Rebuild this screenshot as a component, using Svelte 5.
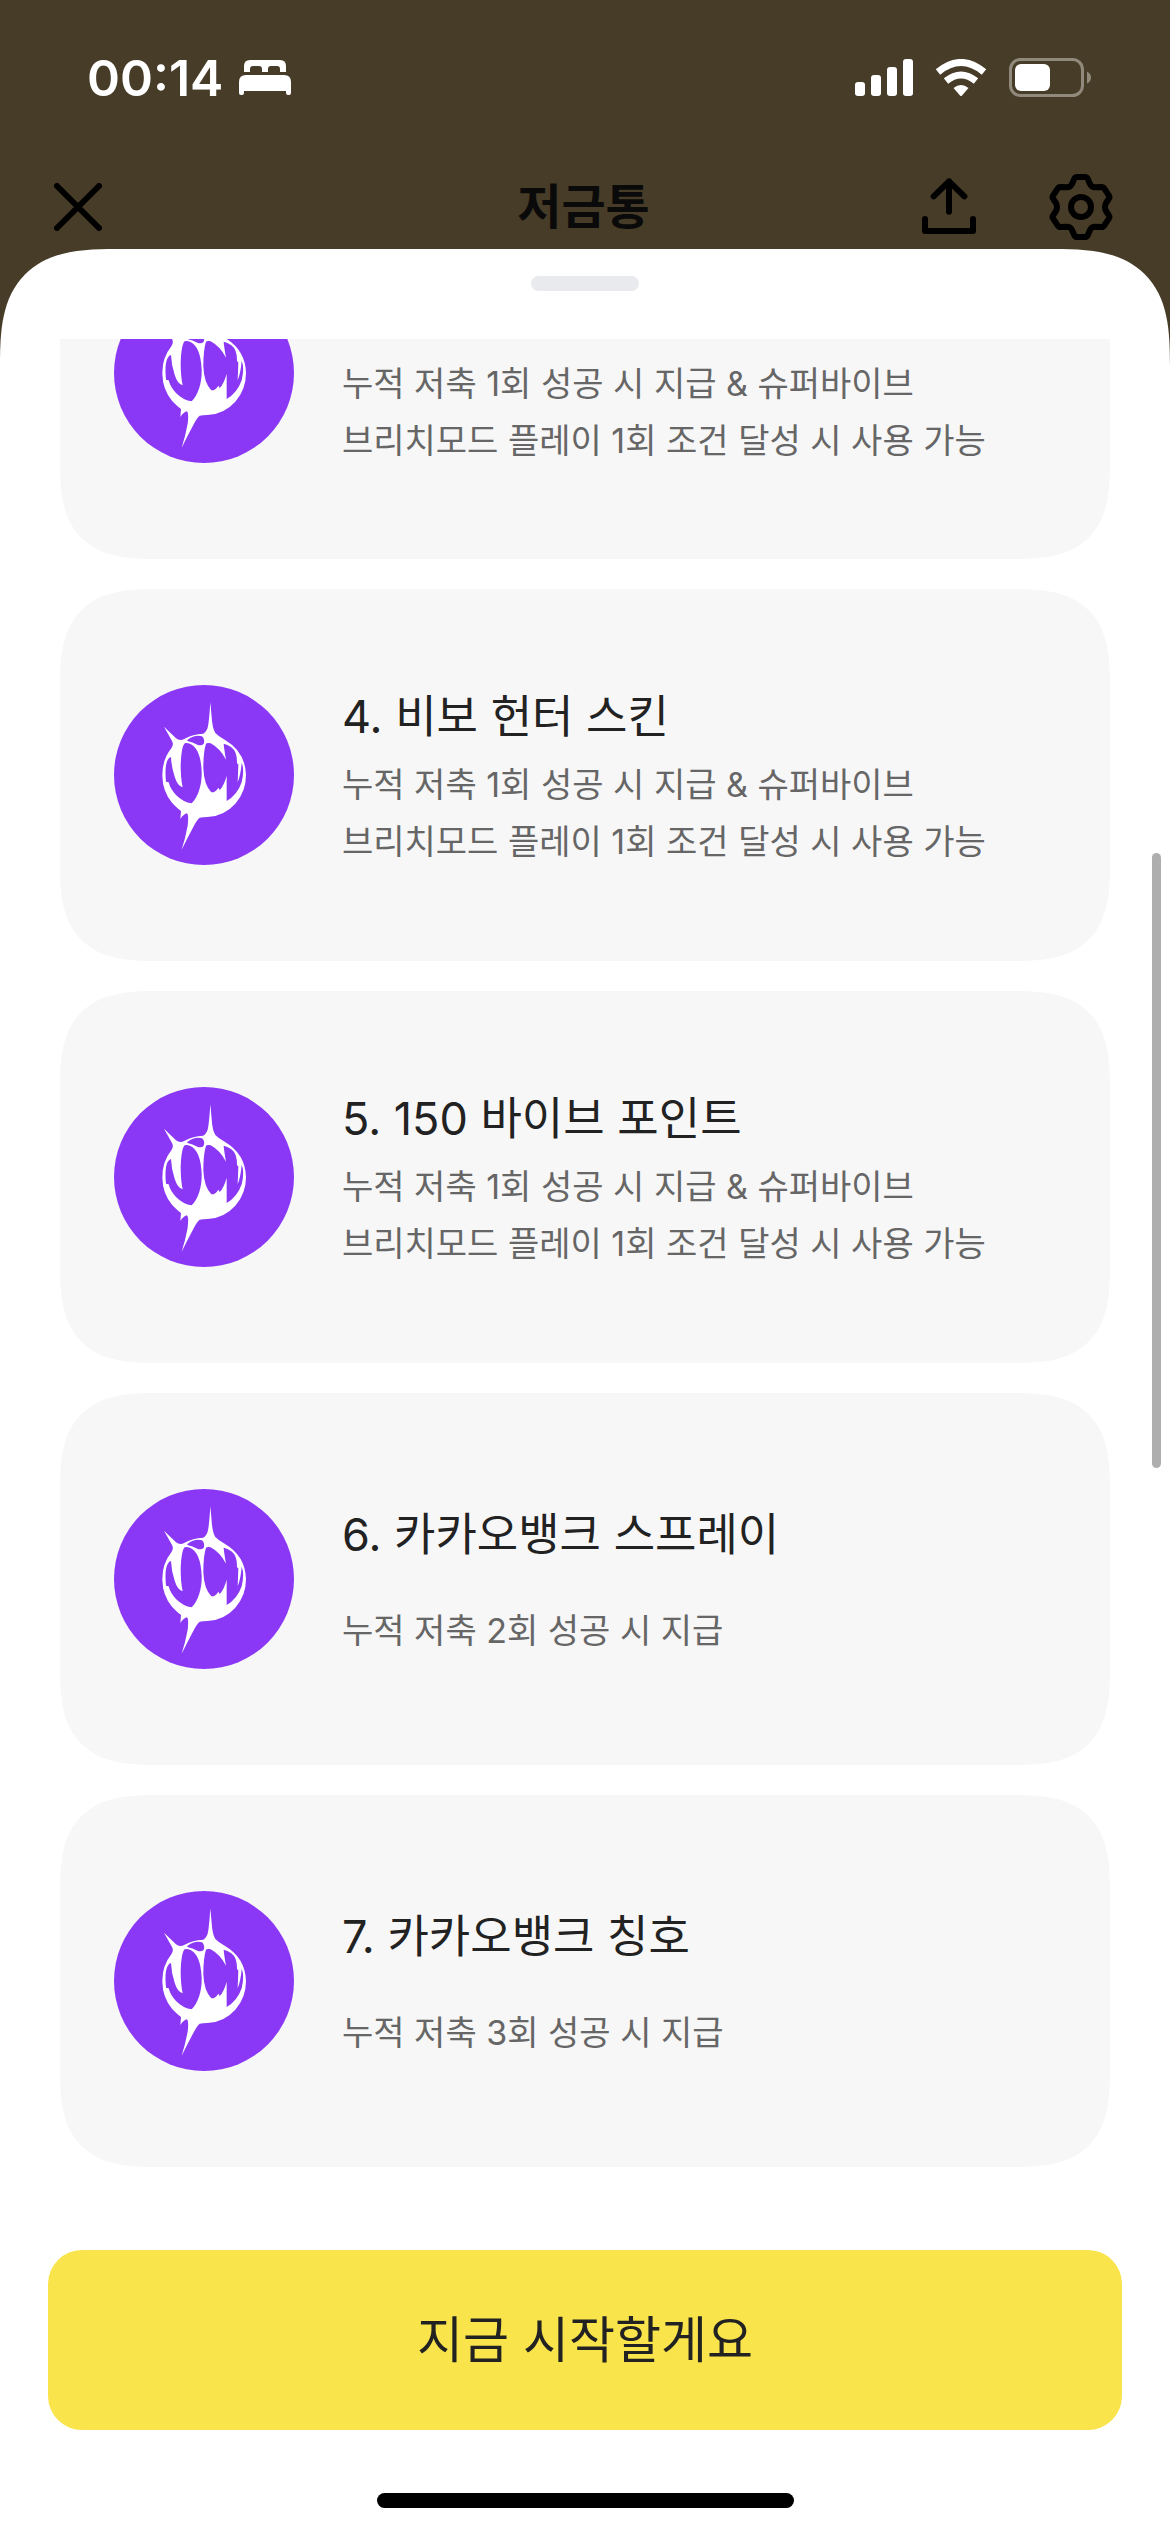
<script lang="ts">
interface Reward {
	title: string;
	lines: string[];
}

const playCondition = [
	"누적 저축 1회 성공 시 지급 & 슈퍼바이브",
	"브리치모드 플레이 1회 조건 달성 시 사용 가능",
];

const rewards: Reward[] = [
	{ title: "4. 비보 헌터 스킨", lines: playCondition },
	{ title: "5. 150 바이브 포인트", lines: playCondition },
	{ title: "6. 카카오뱅크 스프레이", lines: ["누적 저축 2회 성공 시 지급"] },
	{ title: "7. 카카오뱅크 칭호", lines: ["누적 저축 3회 성공 시 지급"] },
];
</script>

{#snippet emblem()}
	<svg class="emblem" viewBox="-108 -30 540 540" aria-hidden="true">
		<circle cx="162" cy="240" r="270" fill="#8a37f6" />
		<path
			fill="#fff"
			fill-rule="evenodd"
			d="M181 22C179 50 178 68 175 88Q172 110 160 116Q128 118 104 131Q90 140 78 130L42 95L66 138Q72 148 64 160Q36 195 37 243Q38 290 66 323Q82 340 93 348L91 372Q100 358 110 355Q117 357 113 392Q106 430 95 464Q112 430 128 400Q140 375 149 368Q158 366 172 366Q222 364 256 326Q288 290 288 240Q286 170 224 134Q205 124 196 114Q187 100 185 66Z
			M112 135Q135 118 156 124Q166 132 161 146Q155 154 142 149Q128 142 112 138Z
			M63 186C48 190 44 220 48 260L56 262Q61 282 78 300Q100 322 125 325C145 305 156 270 155 230Q152 160 120 146Q110 143 104 145Q94 155 92 210Q92 250 98 277Q82 272 74 245Q64 215 63 186Z
			M168 146Q160 170 160 220Q162 270 184 292Q196 293 205 278L209 285Q222 272 230 242L230 318Q262 300 275 262Q284 225 275 203Q272 240 263 262L265 208L261 205Q262 170 244 157Q232 148 221 146Q222 160 228 194Q210 160 182 145Q172 142 168 146Z"
		/>
	</svg>
{/snippet}

<div class="screen">
	<div class="status-bar">
		<div class="status-left">
			<span class="clock">00:14</span>
			<svg width="52" height="36" viewBox="0 0 52 36" fill="#fff" aria-hidden="true">
				<path d="M5 12V6Q5 0 11 0H41Q47 0 47 6V12H41V9Q41 6 38 6H32Q29 6 29 9V12H23V9Q23 6 20 6H14Q11 6 11 9V12Z" />
				<path d="M0 22Q0 15 7 15H45Q52 15 52 22V33Q52 35 50 35H49Q47 35 47 33V31H5V33Q5 35 3 35H2Q0 35 0 33Z" />
			</svg>
		</div>
		<div class="status-right">
			<svg width="58" height="38" viewBox="0 0 58 38" fill="#fff" aria-hidden="true">
				<rect x="0" y="23" width="10" height="14" rx="3" />
				<rect x="16" y="16" width="10" height="21" rx="3" />
				<rect x="32" y="8" width="10" height="29" rx="3" />
				<rect x="48" y="0" width="10" height="37" rx="3" />
			</svg>
			<svg width="52" height="38" viewBox="0 0 52 38" aria-hidden="true">
				<g fill="none" stroke="#fff" stroke-width="7">
					<path d="M3 13Q26 -6 49 13" />
					<path d="M11 22Q26 10 41 22" />
				</g>
				<path d="M18.500 29Q26 23 33.500 29L27 36.500Q26 37.500 25 36.500Z" fill="#fff" />
			</svg>
			<svg width="83" height="40" viewBox="0 0 83 40" aria-hidden="true">
				<rect x="1.500" y="1.500" width="72" height="36" rx="10" fill="none" stroke="#91897b" stroke-width="3" />
				<rect x="6" y="6" width="35" height="27" rx="6" fill="#fff" />
				<path d="M78 13.500Q82 15.500 82 19.500Q82 23.500 78 25.500Z" fill="#91897b" />
			</svg>
		</div>
	</div>

	<header class="nav-bar">
		<button class="icon-button" aria-label="닫기">
			<svg width="48" height="48" viewBox="0 0 48 48" aria-hidden="true">
				<path d="M3 3L45 45M45 3L3 45" stroke="#000" stroke-width="6" stroke-linecap="round" />
			</svg>
		</button>
		<h1>저금통</h1>
		<div class="nav-actions">
			<button class="icon-button" aria-label="공유">
				<svg width="54" height="66" viewBox="63 42 162 198" fill="none" stroke="#000" stroke-width="18" stroke-linecap="round" stroke-linejoin="round" aria-hidden="true">
					<path d="M144 64V155M98 109L144 64L190 109M72 177V213H216V177" />
				</svg>
			</button>
			<button class="icon-button" aria-label="설정">
				<svg width="64" height="66" viewBox="444 42 192 198" fill="none" stroke="#000" stroke-width="18" stroke-linejoin="round" aria-hidden="true">
					<path d="M528 51H552Q557 51 560 56L567 72Q571 82 583 82L602 81Q607 81 610 86L624 107Q627 112 623 117L615 129Q609 141 615 153L623 165Q627 170 624 175L610 196Q607 201 602 201L583 200Q571 200 567 210L560 226Q557 231 552 231H528Q523 231 520 226L513 210Q509 200 497 200L478 201Q473 201 470 196L456 175Q453 170 457 165L465 153Q471 141 465 129L457 117Q453 112 456 107L470 86Q473 81 478 81L497 82Q509 82 513 72L520 56Q523 51 528 51Z" />
					<circle cx="540" cy="141" r="30" />
				</svg>
			</button>
		</div>
	</header>

	<main class="sheet">
		<div class="grabber"></div>

		<ul class="reward-list">
			<li class="card cut">
				{@render emblem()}
				<div class="card-text">
					<p>
						{#each playCondition as line}
							<span>{line}</span>
						{/each}
					</p>
				</div>
			</li>
			{#each rewards as reward}
				<li class="card">
					{@render emblem()}
					<div class="card-text" class:single={reward.lines.length === 1}>
						<h2>{reward.title}</h2>
						<p>
							{#each reward.lines as line}
								<span>{line}</span>
							{/each}
						</p>
					</div>
				</li>
			{/each}
		</ul>

		<div class="footer">
			<button class="start-button">지금 시작할게요</button>
			<div class="home-indicator"></div>
		</div>

		<div class="scroll-thumb"></div>
	</main>
</div>

<style>
	:global(body) {
		background: #473c27;
	}

	.screen {
		display: flex;
		flex-direction: column;
		min-height: 100vh;
		box-sizing: border-box;
		font-family: Inter, "Noto Sans CJK KR", sans-serif;
		background: #473c27;
	}

	.status-bar {
		display: flex;
		justify-content: space-between;
		align-items: center;
		height: 156px;
		padding: 0 78px 0 87px;
		box-sizing: border-box;
	}

	.status-left {
		display: flex;
		align-items: center;
		gap: 16px;
	}

	.status-right {
		display: flex;
		align-items: center;
		gap: 22px;
	}

	.clock {
		font-size: 50px;
		line-height: 60px;
		font-weight: 600;
		color: #fff;
	}

	.nav-bar {
		display: grid;
		grid-template-columns: 1fr auto 1fr;
		align-items: center;
		height: 93px;
		padding: 9px 57px 0 54px;
		box-sizing: border-box;
	}

	h1 {
		margin: 0;
		font-size: 48px;
		line-height: 66px;
		font-weight: 700;
		color: #0a0a0a;
	}

	.nav-actions {
		display: flex;
		justify-content: flex-end;
		gap: 73px;
	}

	.icon-button {
		display: flex;
		justify-self: start;
		padding: 0;
		border: 0;
		background: none;
		cursor: pointer;
	}

	svg {
		display: block;
		flex: none;
	}

	.sheet {
		position: relative;
		flex: 1;
		display: flex;
		flex-direction: column;
		background: #fff;
		border-radius: 90px 90px 0 0;
	}

	.grabber {
		width: 108px;
		height: 15px;
		margin: 27px auto 48px;
		border-radius: 8px;
		background: #e9eaee;
	}

	.reward-list {
		display: flex;
		flex-direction: column;
		gap: 30px;
		margin: 0;
		padding: 0 60px;
		list-style: none;
	}

	.card {
		display: flex;
		align-items: center;
		gap: 48px;
		height: 372px;
		padding: 0 54px;
		box-sizing: border-box;
		border-radius: 74px;
		background: #f7f7f7;
	}

	/* the list is scrolled part way through this card */
	.card.cut {
		align-items: flex-end;
		height: 220px;
		padding-bottom: 90px;
		border-radius: 0 0 74px 74px;
		overflow: hidden;
	}

	.cut .emblem {
		margin-bottom: 6px;
	}

	@supports (corner-shape: superellipse(1.5)) {
		.sheet {
			border-radius: 116px 116px 0 0;
			corner-shape: superellipse(1.5);
		}

		.card {
			border-radius: 98px;
			corner-shape: superellipse(1.5);
		}

		.card.cut {
			border-radius: 0 0 98px 98px;
		}
	}

	.emblem {
		width: 180px;
		height: 180px;
	}

	.card-text {
		display: flex;
		flex-direction: column;
		gap: 6px;
		padding-top: 3px;
	}

	.card-text.single {
		gap: 34px;
	}

	h2 {
		margin: 0;
		font-size: 45px;
		line-height: 66px;
		font-weight: 400;
		color: #222;
	}

	p {
		margin: 0;
		font-size: 34px;
		line-height: 57px;
		color: #666;
	}

	p span {
		display: block;
	}

	.footer {
		display: flex;
		flex-direction: column;
		align-items: center;
		gap: 63px;
		margin-top: auto;
		padding: 48px 48px 24px;
	}

	.start-button {
		width: 100%;
		height: 180px;
		padding: 0 0 8px;
		border: 0;
		border-radius: 34px;
		background: #f9e44b;
		font-family: inherit;
		font-size: 50px;
		font-weight: 400;
		color: #222;
		cursor: pointer;
	}

	.home-indicator {
		width: 417px;
		height: 15px;
		border-radius: 8px;
		background: #000;
	}

	.scroll-thumb {
		position: absolute;
		top: 604px;
		right: 9px;
		width: 9px;
		height: 615px;
		border-radius: 5px;
		background: #aeaeae;
	}
</style>
